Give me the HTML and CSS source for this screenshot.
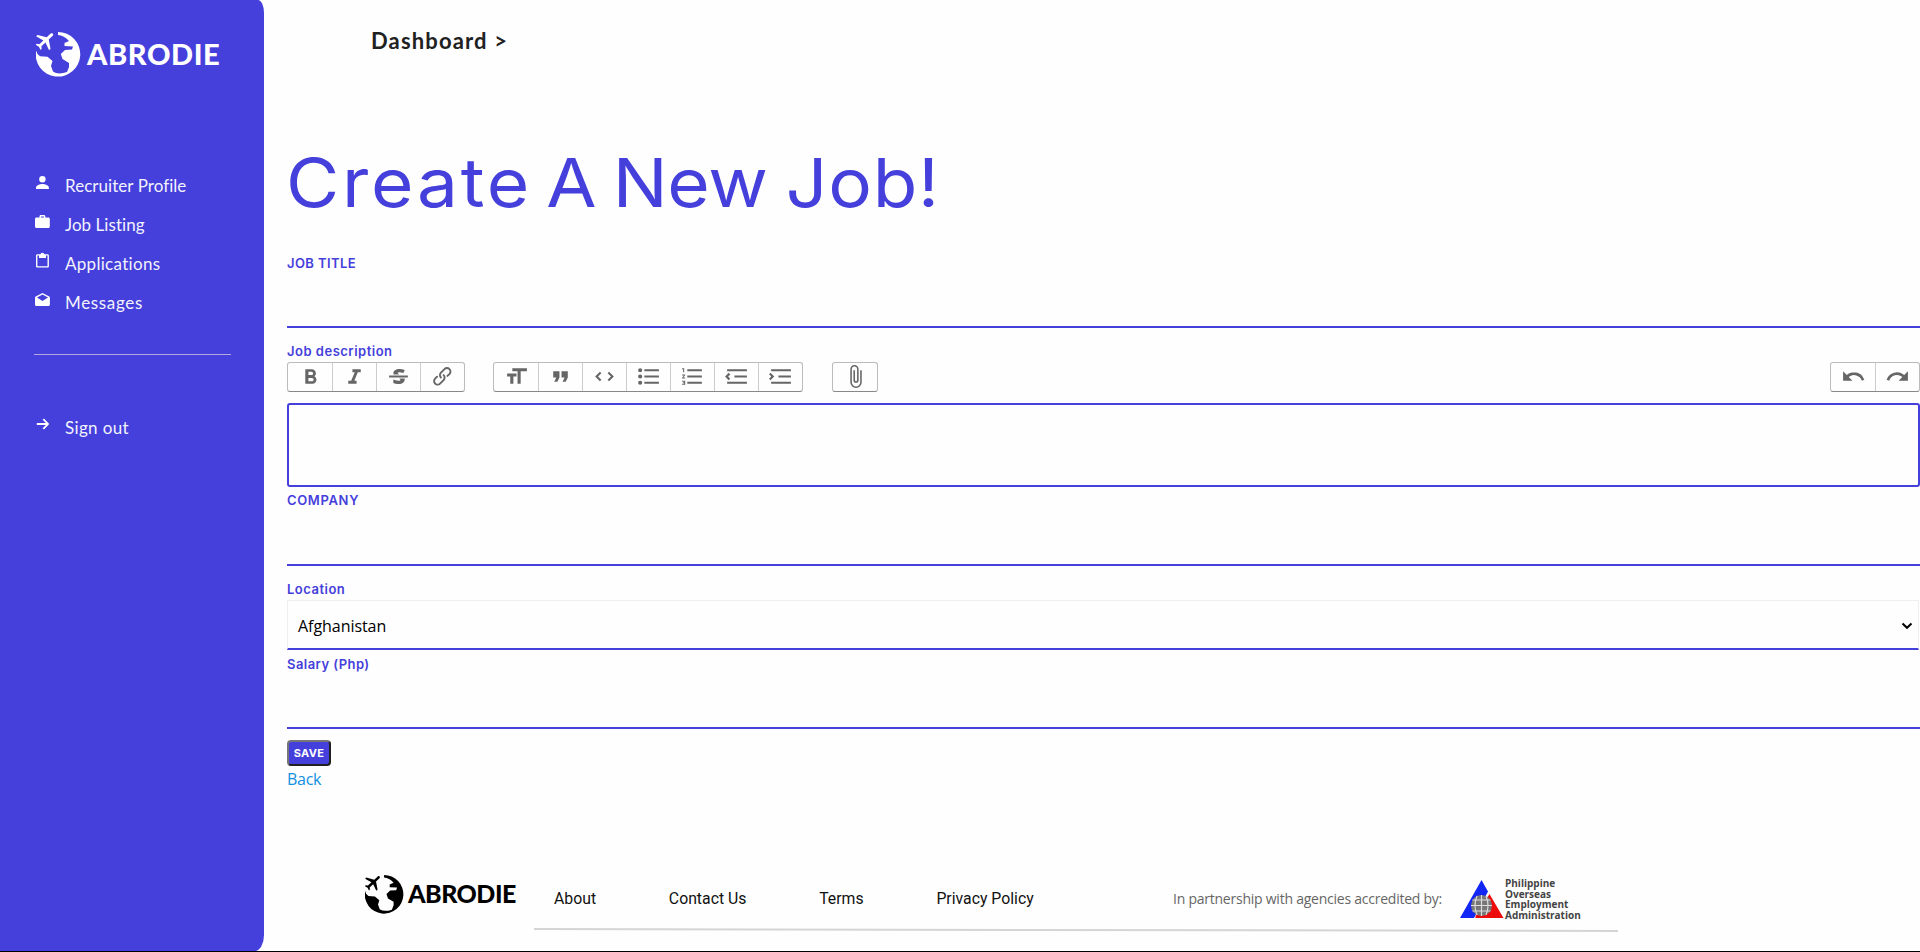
FILE: index.html
```html
<!DOCTYPE html>
<html lang="en">
<head>
<meta charset="utf-8">
<title>Abrodie</title>
<link rel="stylesheet" href="styles.css">
</head>
<body>
<svg class="defs" aria-hidden="true">
  <symbol id="globe" viewBox="0 0 45 45">
    <path d="M22 0A22.3 22.3 0 1 1 0 18.500L1.500 22 4 24.200 11.500 24.800 16.500 29 15 34 17 39.500Q22 43 31 40L33 35 33 31 26.500 27 24.800 22 29 18 36 17.500 37 14.500 28.500 14 28.500 11 33 9Q28 3.500 22 3z"/>
    <path transform="translate(9.500 8.500) rotate(47) translate(-11.500 -12)" d="M21 16v-2l-8-5V3.500c0-.83-.67-1.500-1.500-1.500S10 2.670 10 3.500V9l-8 5v2l8-2.500V19l-2 1.500V22l3.500-1 3.500 1v-1.500L13 19v-5.500l8 2.500z"/>
  </symbol>
</svg>
<div class="page">
  <aside class="sidebar">
    <div class="brand"><svg class="brand-globe"><use href="#globe"/></svg><span class="brand-name">ABRODIE</span></div>
    <nav class="nav">
      <a class="nav-item"><svg viewBox="0 0 16 16"><circle cx="8.400" cy="5.200" r="3.200"/><path d="M2 15v-1.300c0-2.400 4-3.700 6.400-3.700s6.500 1.300 6.500 3.700V15z"/></svg><span>Recruiter Profile</span></a>
      <a class="nav-item"><svg viewBox="0 0 16 16"><path fill-rule="evenodd" d="M5.500 4.500V3.300C5.500 2.600 6.100 2 6.800 2H10c.7 0 1.300.6 1.300 1.300v1.200h3c.9 0 1.500.6 1.500 1.500v7.500c0 .9-.6 1.500-1.500 1.500H2.500C1.600 15 1 14.400 1 13.500V6c0-.9.6-1.500 1.500-1.500zm1.400 0h3V3.400h-3z"/></svg><span>Job Listing</span></a>
      <a class="nav-item applications"><svg viewBox="0 0 16 16"><path fill-rule="evenodd" d="M6.300 2.300a2.200 2.200 0 0 1 4.200 0h3c.8 0 1.400.6 1.400 1.400v10.500c0 .8-.6 1.400-1.400 1.400H3.400c-.8 0-1.400-.6-1.400-1.400V3.700c0-.8.6-1.400 1.400-1.400zM5 3.600H3.400v10.600h10.100V3.600H12v2.300H5z"/></svg><span>Applications</span></a>
      <a class="nav-item messages"><svg viewBox="0 0 16 16"><path fill-rule="evenodd" d="M8.500 2l6.700 3.500c.4.300.7.700.7 1.200v6.800c0 .8-.6 1.500-1.500 1.500h-12C1.600 15 1 14.300 1 13.500V6.700c0-.5.300-.9.700-1.200zm0 1.500L3 6.500l5.500 3.400L14 6.500z"/></svg><span>Messages</span></a>
    </nav>
    <hr class="rule">
    <a class="nav-item signout"><svg viewBox="0 0 16 16"><path class="stroke" d="M2.800 8H14M9.300 3.100L14 8l-4.700 4.900"/></svg><span>Sign out</span></a>
  </aside>

  <main class="main">
    <header class="crumb">Dashboard &gt;</header>
    <h1 class="title"><span class="w-create">Create</span> <span class="w-a">A</span> <span class="w-new">New</span> <span class="w-job">Job!</span></h1>
    <form class="form">
      <label class="label l-title">JOB TITLE</label>
      <input class="field">
      <label class="label l-desc">Job description</label>
      <div class="toolbar">
        <div class="group">
          <button type="button"><svg viewBox="0 0 24 24"><path d="M15.600 11.800c1-.7 1.600-1.800 1.600-2.800a4 4 0 0 0-4-4H7v14h7c2.100 0 3.700-1.700 3.700-3.800 0-1.500-.8-2.800-2.100-3.400zM10 7.500h3a1.500 1.500 0 1 1 0 3h-3v-3zm3.500 9H10v-3h3.500a1.500 1.500 0 1 1 0 3z"/></svg></button>
          <button type="button"><svg viewBox="0 0 24 24"><path d="M10 5v3h2.200l-3.400 8H6v3h8v-3h-2.200l3.400-8H18V5h-8z"/></svg></button>
          <button type="button"><svg viewBox="0 0 24 24"><path d="M12.730 14l.28.140c.26.150.45.300.57.440.12.140.18.300.18.500 0 .300-.15.560-.44.750-.3.200-.76.300-1.390.300A13.520 13.520 0 0 1 7 14.950v3.370a10.640 10.640 0 0 0 4.840.880c1.260 0 2.350-.19 3.280-.56.930-.37 1.640-.9 2.140-1.570s.74-1.450.740-2.320c0-.26-.02-.51-.060-.75h-5.210zm-5.500-4c-.08-.34-.12-.7-.12-1.100 0-1.290.520-2.300 1.580-3.020 1.050-.72 2.500-1.080 4.340-1.080 1.620 0 3.280.340 4.970 1l-1.300 2.930c-1.470-.6-2.730-.9-3.800-.9-.55 0-.96.080-1.200.260-.26.170-.38.380-.38.640 0 .270.160.520.480.740.170.120.530.300 1.050.530H7.230zM3 13h18v-2H3v2z"/></svg></button>
          <button type="button"><svg viewBox="0 0 24 24"><path d="M9.880 13.700a4.300 4.300 0 0 1 0-6.070l3.370-3.370a4.260 4.260 0 0 1 6.070 0 4.300 4.300 0 0 1 0 6.060l-1.960 1.720a.91.910 0 1 1-1.300-1.300l1.970-1.710a2.460 2.460 0 0 0-3.480-3.480l-3.380 3.370a2.460 2.460 0 0 0 0 3.480.91.910 0 1 1-1.300 1.300z"/><path d="M4.250 19.460a4.300 4.300 0 0 1 0-6.070l1.930-1.900a.91.910 0 1 1 1.300 1.300l-1.930 1.900a2.460 2.460 0 0 0 3.480 3.480l3.370-3.380c.96-.96.960-2.520 0-3.480a.91.910 0 1 1 1.300-1.300 4.300 4.300 0 0 1 0 6.070l-3.380 3.380a4.260 4.260 0 0 1-6.070 0z"/></svg></button>
        </div>
        <div class="group">
          <button type="button"><svg viewBox="0 0 24 24"><path d="M12 9v3H9v7H6v-7H3V9h9zM8 4h14v3h-6v12h-3V7H8V4z"/></svg></button>
          <button type="button"><svg viewBox="0 0 24 24"><path d="M6 17h3l2-4V7H5v6h3zm8 0h3l2-4V7h-6v6h3z"/></svg></button>
          <button type="button"><svg viewBox="0 0 24 24"><path d="M18.200 12L15 15.200l1.400 1.400L21 12l-4.600-4.600L15 8.800l3.200 3.200zM5.800 12L9 8.800 7.600 7.400 3 12l4.600 4.600L9 15.200 5.800 12z"/></svg></button>
          <button type="button"><svg viewBox="0 0 24 24"><path d="M4 4a2 2 0 1 0 0 4 2 2 0 0 0 0-4zm0 6a2 2 0 1 0 0 4 2 2 0 0 0 0-4zm0 6a2 2 0 1 0 0 4 2 2 0 0 0 0-4zm4 3h14v-2H8v2zm0-6h14v-2H8v2zm0-8v2h14V5H8z"/></svg></button>
          <button type="button"><svg viewBox="0 0 24 24"><path d="M2 17h2v.5H3v1h1v.5H2v1h3v-4H2v1zm1-9h1V4H2v1h1v3zm-1 3h1.800L2 13.100v.9h3v-1H3.200L5 10.900V10H2v1zm5-6v2h14V5H7zm0 14h14v-2H7v2zm0-6h14v-2H7v2z"/></svg></button>
          <button type="button"><svg viewBox="0 0 24 24"><path d="M3 19h19v-2H3v2zm7-6h12v-2H10v2zm-8.300-.3l2.800 2.900L6 14.200 4 12l2-2-1.400-1.500L1 12l.7.700zM3 5v2h19V5H3z"/></svg></button>
          <button type="button"><svg viewBox="0 0 24 24"><path d="M3 19h19v-2H3v2zm7-6h12v-2H10v2zm-6.900-1L1 14.200l1.400 1.400L6 12l-.7-.7-2.800-2.800L1 9.900 3.100 12zM3 5v2h19V5H3z"/></svg></button>
        </div>
        <div class="group">
          <button type="button"><svg viewBox="0 0 24 24"><path d="M16.500 6v11.500a4 4 0 1 1-8 0V5a2.500 2.500 0 0 1 5 0v10.500a1 1 0 1 1-2 0V6H10v9.500a2.500 2.500 0 0 0 5 0V5a4 4 0 1 0-8 0v12.500a5.500 5.500 0 0 0 11 0V6h-1.500z"/></svg></button>
        </div>
        <div class="group history">
          <button type="button"><svg viewBox="0 0 24 24"><path d="M12.500 8c-2.600 0-5 1-6.900 2.600L2 7v9h9l-3.600-3.600A8 8 0 0 1 20 16l2.400-.8a10.500 10.500 0 0 0-10-7.200z"/></svg></button>
          <button type="button"><svg viewBox="0 0 24 24"><path d="M18.400 10.600a10.500 10.500 0 0 0-16.900 4.600L4 16a8 8 0 0 1 12.700-3.600L13 16h9V7l-3.600 3.600z"/></svg></button>
        </div>
      </div>
      <div class="editor"></div>
      <label class="label l-company">COMPANY</label>
      <input class="field tall">
      <label class="label l-location">Location</label>
      <div class="select"><span>Afghanistan</span><svg viewBox="0 0 12 8"><path d="M1.500 1.500L6 5.800l4.500-4.300"/></svg></div>
      <label class="label l-salary">Salary (Php)</label>
      <input class="field">
      <button type="button" class="save">SAVE</button>
      <a class="back">Back</a>
    </form>

    <footer class="footer">
      <div class="footer-row">
        <div class="footer-brand"><svg><use href="#globe"/></svg><span>ABRODIE</span></div>
        <div class="footer-links"><span>About</span><span>Contact Us</span><span>Terms</span><span>Privacy Policy</span></div>
        <div class="partner">In partnership with agencies accredited by:</div>
        <div class="poea">
          <svg viewBox="0 0 44 39"><path fill="#1226f5" d="M21.500 0L28 11.500 14 38H0z"/><path fill="#ec0c0c" d="M29.500 14L43.500 38H15.500V36z"/><circle cx="21.500" cy="25.500" r="10.500" fill="#777"/><path fill="none" stroke="#ddd" stroke-width="1.200" d="M21.500 15v21M11 25.500h21M12.500 20h18M12.500 31h18M17 16q-4 9.500 0 19M26 16q4 9.500 0 19"/></svg>
          <div class="poea-text"><span>Philippine</span><span>Overseas</span><span>Employment</span><span>Administration</span></div>
        </div>
      </div>
      <svg class="footer-rule" viewBox="0 0 1084 4"><path d="M0 1L1084 3"/></svg>
    </footer>
  </main>
</div>
</body>
</html>
```
FILE: styles.css
```css
* { box-sizing: border-box; }
body { margin: 0; background: #fefefe; font-family: "Open Sans", "Noto Sans", sans-serif; }
.defs { display: none; }
.page { display: flex; height: 952px; overflow: hidden; border-bottom: 1px solid #000; }

/* Sidebar */
.sidebar { flex: none; width: 264px; background: #4540db; color: #fff; border-radius: 0 6px 9px 0 / 0 13px 16px 0; }
.brand { display: flex; align-items: center; height: 45px; margin: 32px 0 0 36px; }
.brand-globe { width: 45px; height: 45px; fill: #fff; }
.brand-name { margin-left: 6px; padding-bottom: 2px; font: 900 29px/43px Lato, sans-serif; letter-spacing: 0.6px; }
.nav { margin-top: 89px; }
.nav-item { display: flex; align-items: center; height: 39px; padding-left: 34px; font: 17px/20px Lato, sans-serif; letter-spacing: 0.05px; color: #f2f2fc; }
.nav-item svg { width: 16px; height: 16px; margin: 0 15px 7px 0; fill: #fff; }
.nav-item .stroke { fill: none; stroke: #fff; stroke-width: 1.8; }
.applications { letter-spacing: 0.3px; }
.messages { letter-spacing: 0.65px; }
.rule { width: 197px; height: 1px; margin: 32px 0 0 34px; border: 0; background: #b4a8d8; }
.signout { margin-top: 53px; letter-spacing: 0.35px; }

/* Main column */
.main { flex: 1; min-width: 0; padding-left: 23px; }
.crumb { height: 80px; padding-left: 84px; font: 700 22px/81px Lato, sans-serif; letter-spacing: 1.15px; color: #212121; }
.title { display: flex; margin: 63px 0 0 -1px; height: 80px; font: 400 67.5px/80px Inter, sans-serif; color: #4540db; white-space: nowrap; transform: scaleX(1.08); transform-origin: 0 50%; }
.w-create { letter-spacing: 2.6px; }
.w-a { margin-left: 13px; }
.w-new { margin-left: 15px; letter-spacing: -0.3px; }
.w-job { margin-left: 17px; letter-spacing: 0.7px; }

/* Form */
.form { display: flex; flex-direction: column; align-items: stretch; }
.label { height: 20px; font: 600 13px/20px Inter, sans-serif; letter-spacing: 0.5px; color: #4540db; }
.l-title { margin-top: 30px; letter-spacing: 0.4px; }
.l-desc { margin-top: 14px; line-height: 18px; }
.l-company { margin-top: 3px; letter-spacing: 0.65px; }
.l-location { margin-top: 13px; }
.l-salary { margin-top: 4px; letter-spacing: 0.45px; }
.field { height: 55px; border: 0; border-bottom: 2px solid #4540db; background: transparent; padding: 0; outline: 0; }
.tall { height: 56px; }
.toolbar { display: flex; height: 30px; }
.group { display: flex; margin-right: 28px; border: 1px solid #bbb; border-bottom-color: #888; border-radius: 3px; }
.group + .group + .group { margin-left: 1px; }
.group.history { margin-left: auto !important; margin-right: 0; }
.group button { width: 44px; padding: 0 0 1px; border: 0; border-left: 1px solid #ccc; background: transparent; display: flex; align-items: center; justify-content: center; }
.group button:first-child { border-left: 0; }
.group svg { flex: none; width: 25px; height: 25px; fill: #666; }
.editor { height: 84px; margin-top: 11px; border: 2px solid #4540db; border-radius: 3px; }
.select { display: flex; align-items: center; justify-content: space-between; height: 50px; margin: 1px 1px 0 0; padding: 2px 5px 0 10px; border: 1px solid #efefef; border-bottom: 2px solid #4540db; font-size: 16px; letter-spacing: -0.05px; color: #000; }
.select svg { width: 12px; height: 8px; fill: none; stroke: #000; stroke-width: 2; }
.save { align-self: flex-start; width: 44px; height: 26px; margin-top: 11px; padding: 0; border: 2px solid; border-color: #767676 #212121 #212121 #767676; border-radius: 4px; background: #4540db; color: #fff; font: 700 11px/20px Inter, sans-serif; letter-spacing: 0.3px; }
.back { height: 24px; margin-top: 1px; font-size: 16px; line-height: 24px; letter-spacing: -0.3px; color: #1190e0; }

/* Footer */
.footer { margin-top: 59px; }
.footer-row { display: flex; height: 78px; }
.footer-brand { display: flex; margin: 25px 0 0 78px; height: 39px; align-items: center; width: 189px; font: 900 25px/37px Lato, sans-serif; letter-spacing: -0.5px; color: #000; }
.footer-brand svg { width: 39px; height: 39px; margin-right: 4px; }
.footer-brand span { padding-bottom: 2px; }
.footer-links { display: flex; gap: 72.8px; font: 15.8px/24px Roboto, sans-serif; color: #111; margin-top: 37px; width: 619px; white-space: nowrap; }
.partner { font-size: 14px; line-height: 24px; letter-spacing: -0.24px; margin-top: 37px; width: 287px; color: #666; white-space: nowrap; }
.poea { display: flex; margin-top: 30px; }
.poea > svg { width: 44px; height: 39px; }
.poea-text { display: flex; flex-direction: column; font-weight: 700; font-size: 10px; line-height: 10.500px; color: #444; margin: -2px 0 0 1px; }
.footer-rule { display: block; width: 1084px; height: 4px; margin-left: 247px; fill: none; stroke: #d5d5d5; stroke-width: 2; }
```
